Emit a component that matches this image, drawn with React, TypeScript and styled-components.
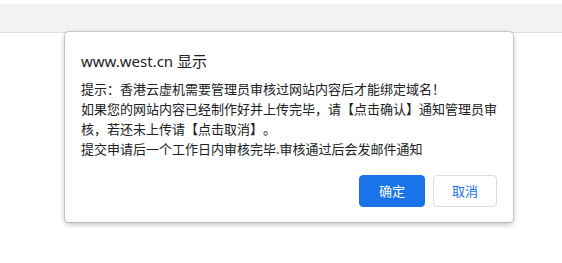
import React from "react";
import styled, { createGlobalStyle } from "styled-components";

const GlobalStyle = createGlobalStyle`
  html, body { margin: 0; padding: 0; background: #ffffff; }
  body {
    width: 562px;
    height: 263px;
    overflow: hidden;
    font-family: "Noto Sans", "Noto Sans CJK SC", sans-serif;
  }
`;

const Page = styled.div`
  position: relative;
  width: 562px;
  height: 263px;
  box-sizing: border-box;
  padding-top: 4px;
  background: #ffffff;
`;

const TopBar = styled.div`
  height: 28px;
  background: #f1f3f4;
  border-bottom: 1px solid #dadce0;
`;

const Dialog = styled.div`
  position: absolute;
  left: 65px;
  top: 32px;
  width: 448px;
  box-sizing: border-box;
  padding: 16px 16px 15px;
  background: #ffffff;
  border-radius: 4px;
  box-shadow: 0 0 0 1px rgba(0, 0, 0, 0.13), 0 2px 5px 1px rgba(0, 0, 0, 0.22);
  color: #202124;
  display: flex;
  flex-direction: column;
`;

const Title = styled.div`
  font-size: 15px;
  line-height: 26px;
  margin-bottom: 5px;
  white-space: nowrap;
  font-family: "Noto Sans", "Noto Sans CJK SC", sans-serif;
`;

const Message = styled.div`
  font-size: 13px;
  line-height: 20px;
  white-space: nowrap;
  font-family: "Noto Sans CJK SC", sans-serif;
  text-spacing-trim: space-all;
  font-feature-settings: "palt" 0, "halt" 0;
  color: #202124;
`;

const Buttons = styled.div`
  display: flex;
  justify-content: flex-end;
  gap: 8px;
  margin-top: 16px;
`;

const Button = styled.button<{ $primary?: boolean }>`
  height: 32px;
  box-sizing: border-box;
  padding: 0 ${(p) => (p.$primary ? "19px" : "18px")};
  border-radius: 4px;
  font-size: 13px;
  font-family: "Noto Sans CJK SC", sans-serif;
  line-height: 30px;
  cursor: pointer;
  border: 1px solid ${(p) => (p.$primary ? "#1a73e8" : "#dadce0")};
  background: ${(p) => (p.$primary ? "#1a73e8" : "#ffffff")};
  color: ${(p) => (p.$primary ? "#ffffff" : "#1a73e8")};
`;

export default function App() {
  return (
    <>
      <GlobalStyle />
      <Page>
        <TopBar />
        <Dialog>
          <Title>www.west.cn 显示</Title>
          <Message>
            提示：香港云虚机需要管理员审核过网站内容后才能绑定域名！
            <br />
            如果您的网站内容已经制作好并上传完毕，请【点击确认】通知管理员审
            <br />
            核，若还未上传请【点击取消】。
            <br />
            提交申请后一个工作日内审核完毕.审核通过后会发邮件通知
          </Message>
          <Buttons>
            <Button $primary>确定</Button>
            <Button>取消</Button>
          </Buttons>
        </Dialog>
      </Page>
    </>
  );
}
